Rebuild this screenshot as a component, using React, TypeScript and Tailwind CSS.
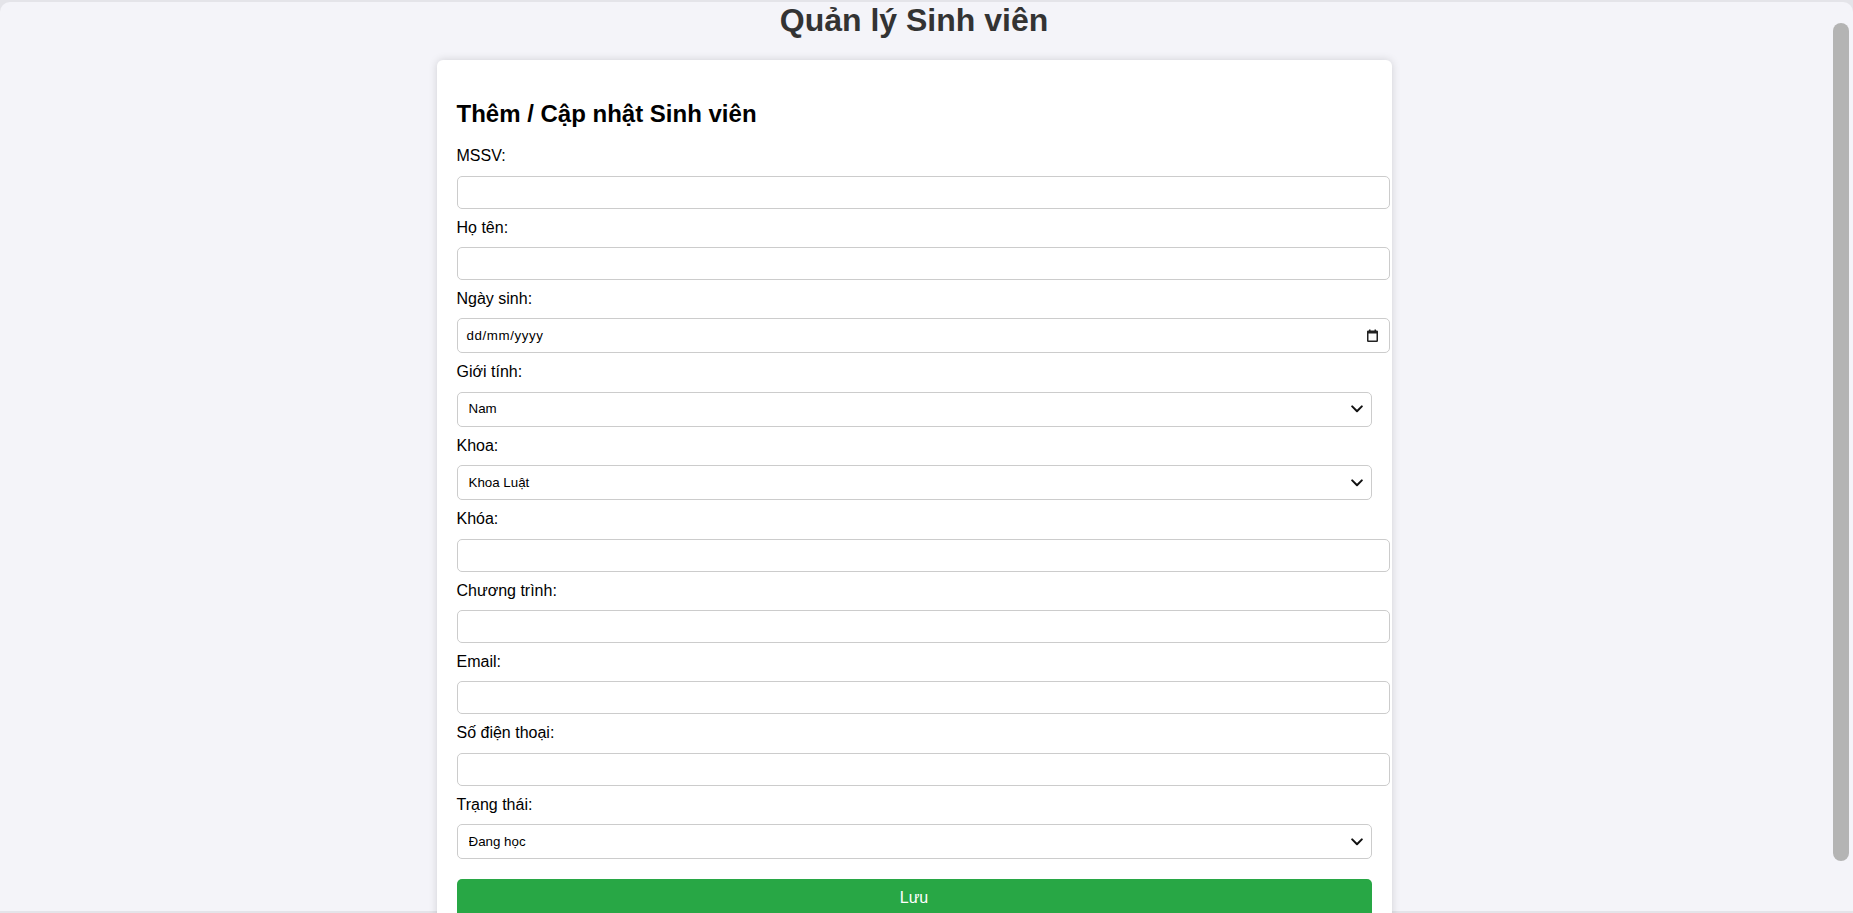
import React from "react";

function Label({ children }: { children: React.ReactNode }) {
  return (
    <label className="block mt-[10px] mb-[10px] text-[16px] leading-[18.4px] text-black">
      {children}
    </label>
  );
}

function TextInput() {
  return (
    <input
      type="text"
      className="block h-[33px] w-[calc(100%+18px)] rounded-[5px] border border-[#cccccc] bg-white px-2 text-[13.333px] text-black outline-none"
    />
  );
}

function Select({ options }: { options: string[] }) {
  return (
    <div className="relative">
      <select className="block h-[35px] w-full appearance-none rounded-[5px] border border-[#cccccc] bg-white pl-[11px] pr-8 text-[13.333px] text-black outline-none">
        {options.map((o) => (
          <option key={o}>{o}</option>
        ))}
      </select>
      <svg
        className="pointer-events-none absolute right-[9px] top-1/2 -translate-y-1/2"
        width="12"
        height="8"
        viewBox="0 0 12 8"
        fill="none"
      >
        <path d="M1.2 1.4 L6 6.2 L10.8 1.4" stroke="#111" strokeWidth="2" strokeLinecap="round" strokeLinejoin="round" />
      </svg>
    </div>
  );
}

function DateInput() {
  return (
    <div className="flex h-[35px] w-[calc(100%+18px)] items-center justify-between rounded-[5px] border border-[#cccccc] bg-white pl-[9px] pr-[11px] text-[13.333px] text-black">
      <span className="tracking-[0.6px]">dd/mm/yyyy</span>
      <svg width="11" height="13" viewBox="0 0 11 13" fill="none">
        <rect x="0.75" y="2.25" width="9.5" height="10" rx="0.5" stroke="#222" strokeWidth="1.5" />
        <rect x="0.5" y="2" width="10" height="2.5" fill="#222" />
        <rect x="2" y="0.5" width="1.5" height="2" fill="#222" />
        <rect x="7.5" y="0.5" width="1.5" height="2" fill="#222" />
      </svg>
    </div>
  );
}

export default function App() {
  return (
    <div className="h-[913px] w-[1853px] overflow-hidden bg-[#e4e4e9] pt-[2px] font-['Liberation_Sans',Arial,sans-serif]">
      <div className="flex h-[909px] rounded-t-[10px] bg-[#f4f4f9]">
        <main className="w-[1828px]">
          <h1 className="mb-[21px] text-center text-[32px] font-bold leading-[36.8px] text-[#333333]">
            Quản lý Sinh viên
          </h1>
          <div className="mx-auto w-[955px] rounded-[6px] bg-white px-5 pt-5 pb-5 shadow-[0_0_8px_rgba(0,0,0,0.15)]">
            <h2 className="mt-[19.92px] mb-[19.92px] text-[24px] font-bold leading-[27.6px] text-black">
              Thêm / Cập nhật Sinh viên
            </h2>
            <form onSubmit={(e) => e.preventDefault()}>
              <Label>MSSV:</Label>
              <TextInput />
              <Label>Họ tên:</Label>
              <TextInput />
              <Label>Ngày sinh:</Label>
              <DateInput />
              <Label>Giới tính:</Label>
              <Select options={["Nam", "Nữ", "Khác"]} />
              <Label>Khoa:</Label>
              <Select
                options={[
                  "Khoa Luật",
                  "Khoa Tiếng Anh thương mại",
                  "Khoa Tiếng Nhật",
                  "Khoa Tiếng Pháp",
                ]}
              />
              <Label>Khóa:</Label>
              <TextInput />
              <Label>Chương trình:</Label>
              <TextInput />
              <Label>Email:</Label>
              <TextInput />
              <Label>Số điện thoại:</Label>
              <TextInput />
              <Label>Trạng thái:</Label>
              <Select
                options={[
                  "Đang học",
                  "Đã tốt nghiệp",
                  "Đã thôi học",
                  "Tạm dừng học",
                ]}
              />
              <button
                type="submit"
                className="mt-[20px] block h-[38px] w-full rounded-[5px] bg-[#28a745] text-[16px] text-white"
              >
                Lưu
              </button>
            </form>
          </div>
        </main>
        <div className="w-[25px] pt-[21px]">
          <div className="ml-[5px] h-[838px] w-[16px] rounded-full bg-[#b4b4b4]" />
        </div>
      </div>
    </div>
  );
}
